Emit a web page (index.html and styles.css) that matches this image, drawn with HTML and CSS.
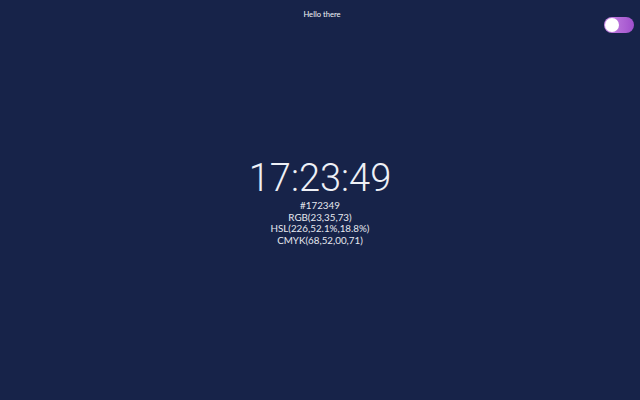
FILE: index.html
```html
<!DOCTYPE html>
<html>
<head>
<meta charset="utf-8">
<link rel="stylesheet" href="styles.css">
</head>
<body>
<div class="page">
  <header class="top">
    <div class="greet">Hello there</div>
    <div class="toggle"><span class="knob"></span></div>
  </header>
  <main class="center">
    <div class="clock">17:23:49</div>
    <div class="codes">
      <div>#172349</div>
      <div>RGB(23,35,73)</div>
      <div>HSL(226,52.1%,18.8%)</div>
      <div>CMYK(68,52,00,71)</div>
    </div>
  </main>
</div>
</body>
</html>
```
FILE: styles.css
```css
html, body { margin: 0; padding: 0; }
body {
  background: #172349;
  color: #fff;
  font-family: Lato, "Open Sans", sans-serif;
  width: 640px;
  height: 400px;
  overflow: hidden;
}
.page { position: relative; width: 640px; height: 400px; display: flex; flex-direction: column; }
.top { height: 30px; position: relative; }
.greet {
  text-align: center;
  font-size: 7.6px;
  padding-top: 9px;
  padding-left: 4px;
  color: #f2f3f7;
}
.toggle {
  position: absolute;
  right: 6px;
  top: 17px;
  width: 30px;
  height: 16px;
  border-radius: 8px;
  background: linear-gradient(90deg, #c98ae4, #a04fcc);
}
.knob {
  position: absolute;
  left: 1px;
  top: 1px;
  width: 14px;
  height: 14px;
  border-radius: 50%;
  background: #fff;
}
.center {
  display: flex;
  flex-direction: column;
  align-items: center;
  padding-top: 126px;
}
.clock {
  font-family: Roboto, sans-serif;
  font-weight: 300;
  font-size: 38px;
  line-height: 44px;
  color: #eef0f6;
}
.codes {
  text-align: center;
  font-size: 9.8px;
  line-height: 11.7px;
  color: #e6e8ef;
}
```
